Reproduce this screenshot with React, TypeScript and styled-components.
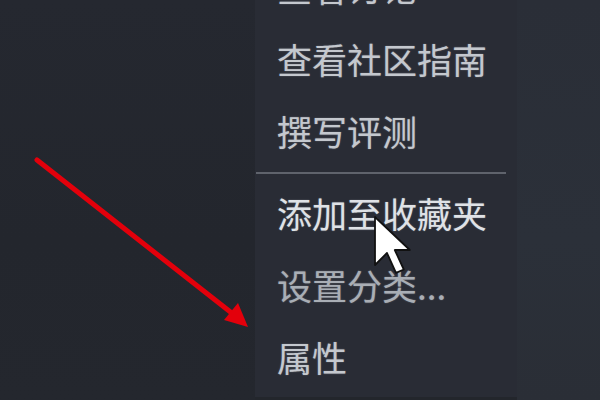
import React from 'react';
import styled, { createGlobalStyle } from 'styled-components';

const GlobalStyle = createGlobalStyle`
  html, body {
    margin: 0;
    padding: 0;
    background: #23262d;
  }
  body {
    font-family: "Noto Sans CJK SC", "Noto Sans", sans-serif;
  }
`;

const Page = styled.div`
  position: relative;
  display: flex;
  width: 600px;
  height: 400px;
  overflow: hidden;
  background: #23262d;
`;

const LeftPane = styled.div`
  width: 255px;
  flex-shrink: 0;
  background: linear-gradient(180deg, #252830 0%, #23262d 60%, #24272e 100%);
`;

const MenuColumn = styled.div`
  width: 262px;
  flex-shrink: 0;
  background: #23262c;
`;

const Menu = styled.ul`
  list-style: none;
  margin: -49px 0 0;
  padding: 0 0 4px;
  background: #292c35;
`;

type Tone = 'normal' | 'bright' | 'dim';

const toneColor: Record<Tone, string> = {
  normal: '#c4c8ce',
  bright: '#dfe2e6',
  dim: '#a9aeb5',
};

const MenuItem = styled.li<{ $tone?: Tone }>`
  height: 72px;
  line-height: 72px;
  padding-left: 22px;
  font-size: 35px;
  white-space: nowrap;
  color: ${(p) => toneColor[p.$tone ?? 'normal']};
  text-shadow: 0 0 1.5px rgba(200, 204, 210, 0.45);
`;

const Separator = styled.li`
  height: 10px;
  display: flex;
  align-items: center;
  padding: 0 11px 0 1px;

  &::before {
    content: '';
    flex: 1;
    height: 2px;
    margin-top: 2px;
    background: #5f636c;
  }
`;

const RightPane = styled.div`
  flex: 1;
  background: linear-gradient(180deg, #2a2e37 0%, #2b3039 60%, #2a2e36 100%);
`;

const Overlay = styled.svg`
  position: absolute;
  left: 0;
  top: 0;
  pointer-events: none;
`;

const Cursor = styled.svg`
  position: absolute;
  left: 372px;
  top: 214px;
  pointer-events: none;
`;

const items: { label: string; tone?: Tone; sepAfter?: boolean }[] = [
  { label: '查看讨论' },
  { label: '查看社区指南' },
  { label: '撰写评测', sepAfter: true },
  { label: '添加至收藏夹', tone: 'bright' },
  { label: '设置分类...', tone: 'dim' },
  { label: '属性' },
];

const App: React.FC = () => {
  return (
    <>
      <GlobalStyle />
      <Page>
        <LeftPane />
        <MenuColumn>
          <Menu>
            {items.map((it) => (
              <React.Fragment key={it.label}>
                <MenuItem $tone={it.tone}>{it.label}</MenuItem>
                {it.sepAfter && <Separator />}
              </React.Fragment>
            ))}
          </Menu>
        </MenuColumn>
        <RightPane />

        {/* red annotation arrow */}
        <Overlay width="600" height="400" viewBox="0 0 600 400">
          <line x1="37" y1="160" x2="233" y2="314" stroke="#e3000b" strokeWidth="5" strokeLinecap="round" />
          <polygon points="248,327 224,320 238,303" fill="#e3000b" />
        </Overlay>

        {/* mouse pointer */}
        <Cursor width="42" height="66" viewBox="0 0 14 22">
          <path
            d="M1 1 L1 17 L5 13 L8 19.6 L10.6 18.5 L7.6 12 L12.6 12 Z"
            fill="#ffffff"
            stroke="#111111"
            strokeWidth="0.6"
            strokeLinejoin="round"
          />
        </Cursor>
      </Page>
    </>
  );
};

export default App;
